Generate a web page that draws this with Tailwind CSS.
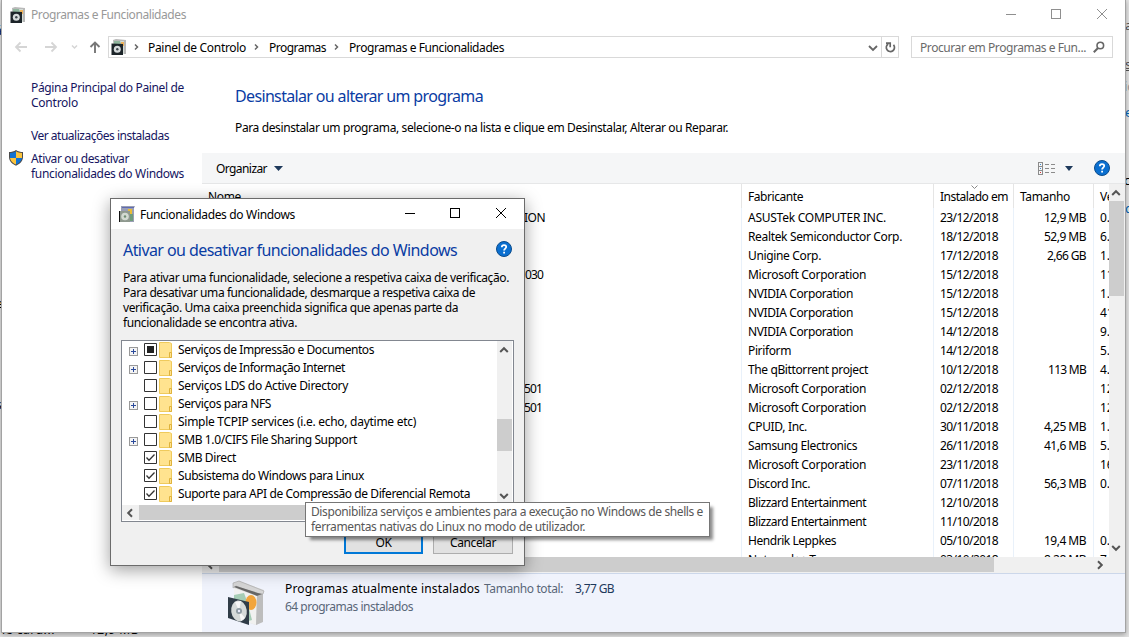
<!DOCTYPE html>
<html lang="pt">
<head>
<meta charset="utf-8">
<title>Programas e Funcionalidades</title>
<script src="https://cdn.jsdelivr.net/npm/@tailwindcss/browser@4"></script>
</head>
<body class="overflow-hidden">
<svg class="hidden">
  <symbol id="box" viewBox="0 0 40 46">
    <path d="M7 3 12 1 37 10 36 14 35 42 29 45 8 38Z" fill="#dcdcdc"/>
    <path d="M7 8 30 16 29 45 7 38Z" fill="#f1f1f0"/>
    <path d="M30 16 36 13 36 42 29 45Z" fill="#bdbdbd"/>
    <path d="M6 3 12 1 37 11 36 14 30 14 9 6 6 8Z" fill="#d5d5d5" stroke="#a5a5a5" stroke-width=".6"/>
    <path d="M7 7 9 6 31 13 35 14 30 16Z" fill="#666"/>
    <path d="M7 15 17 13 20 21 25 40 18 42 7 25Z" fill="#a6cdb5"/>
    <ellipse cx="24" cy="22.500" rx="5.500" ry="7.500" fill="#f2a53c"/>
    <path d="M1 17 22 22 22 45 1 38Z" fill="#303c47"/>
    <ellipse cx="12" cy="31" rx="7.800" ry="10.500" transform="rotate(-8 12 31)" fill="#d6dad9"/>
    <path d="M12 31 8 22 14 21ZM12 31 18 38 14 41Z" fill="#f7f7f7"/>
    <circle cx="12" cy="31" r="3" fill="#8e9ba3"/><circle cx="12" cy="31" r="1.200" fill="#eef"/>
  </symbol>
  <symbol id="disc" viewBox="0 0 16 16">
    <path d="M2 1 5 0 15 1 15 15 3 15Z" fill="#b9b9b9"/><path d="M3 2H13V15H3Z" fill="#d5ddd7"/>
    <path d="M3 2H9L10 5H3Z" fill="#8fb59d"/><path d="M10 3h3v4h-3z" fill="#efb35c"/>
    <path d="M.5 4.500 12 5V16H.5Z" fill="#1c2429"/><circle cx="6.300" cy="10.300" r="3.500" fill="#d5dadb"/><circle cx="6.300" cy="10.300" r="1.200" fill="#3b444b"/>
  </symbol>
  <symbol id="help" viewBox="0 0 16 16">
    <circle cx="8" cy="8" r="7.500" fill="#0a6fd0" stroke="#0b4c8c"/>
    <path d="M5.800 6.200C5.800 3.300 10.300 3.500 10.200 6 10.100 7.600 8.100 7.700 8.100 9.600" fill="none" stroke="#fff" stroke-width="1.800"/><path d="M7.200 10.800h1.800v1.700H7.200z" fill="#fff"/>
  </symbol>
  <symbol id="up" viewBox="0 0 10 8"><path d="M1.200 6 5 2.200 8.800 6" fill="none" stroke="#555" stroke-width="2"/></symbol>
  <symbol id="folder" viewBox="0 0 14 16"><path d="M.5.500H10.500L12.500 1.500V15.500H.5Z" fill="#ffe38f" stroke="#efca5c"/><path d="M10.500 15.500V10.500H12.500V15.500Z" fill="#ffe38f" stroke="#dfb23c"/></symbol>
</svg>

<div class="relative h-[637px] w-[1129px] overflow-hidden bg-[#e4e4e4] font-['Noto_Sans',sans-serif] text-[12px] leading-[15px] whitespace-nowrap text-black">

  <!-- window lying behind: only slivers show at the edges -->
  <div class="absolute top-[18px] left-[1125px] text-[13px] text-[#555]">a</div>
  <div class="absolute top-[57px] left-[1125px] text-[13px] text-[#555] underline">s</div>
  <div class="absolute top-[79px] left-[1124px] text-[13px] text-[#999]">ic</div>
  <div class="absolute top-[105px] left-[1125px] text-[13px] text-[#0067b8]">e</div>
  <div class="absolute top-[173px] left-[1124px] text-[13px]">c</div>
  <div class="absolute top-[201px] left-[1125px] text-[13px] text-[#0067b8]">d</div>
  <div class="absolute top-[23px] left-[-5px]">á</div>
  <div class="absolute top-[296px] left-[-4px]">e</div>
  <div class="absolute top-[397px] left-[-4px]">s</div>
  <div class="absolute top-[622px] left-[2px]" data-w="53">le card...</div>
  <div class="absolute top-[622px] left-[90px]" data-w="49">12,9 MB</div>

  <!-- main window -->
  <div class="absolute -top-px left-px flex h-[634px] w-[1125px] flex-col border border-[#a3a3a3] bg-white shadow-[0_2px_5px_rgba(0,0,0,.3)]">
    <div class="flex h-[29px] shrink-0 items-center pl-2 text-[#999]">
      <svg class="size-4"><use href="#disc"/></svg>
      <span class="ml-[5px]" data-w="155">Programas e Funcionalidades</span>
      <svg class="mr-[17px] mb-px ml-auto h-[12px] w-[104px]" fill="none" stroke="#8f8f8f" shape-rendering="crispEdges"><path d="M2 6.500h10M47.500 1.500h9v9h-9z"/><path d="M93 1 103 11M103 1 93 11" shape-rendering="auto"/></svg>
    </div>
    <div class="flex h-[36px] shrink-0 items-center">
      <svg class="h-[16px] w-[87px]" fill="none"><g stroke="#d5d5d5" stroke-width="1.800"><path d="M25 8H14M18.500 3.500 14 8l4.500 4.500M43 8h11M49.500 3.500 54 8l-4.500 4.500"/></g></svg>
      <svg class="-ml-[19px] h-4 w-[38px]" fill="none"><path d="M2 6.500 4.500 9 7 6.500" stroke="#d5d5d5" stroke-width="1.500"/><path d="M25 14V3.500M20.500 8 25 3.500 29.500 8" stroke="#777" stroke-width="1.900"/></svg>
      <div class="flex h-[22px] w-[791px] items-center border border-[#d9d9d9] pl-[2px]">
        <svg class="size-4"><use href="#disc"/></svg>
        <svg class="ml-[6px] h-2 w-[8px]" fill="none" stroke="#666" stroke-width="1.500"><path d="M2 1.500 4.500 4 2 6.500"/></svg>
        <span class="ml-[7px]" data-w="98">Painel de Controlo</span>
        <svg class="ml-[7px] h-2 w-[8px]" fill="none" stroke="#666" stroke-width="1.500"><path d="M2 1.500 4.500 4 2 6.500"/></svg>
        <span class="ml-[8px]" data-w="57">Programas</span>
        <svg class="ml-[7px] h-2 w-[8px]" fill="none" stroke="#666" stroke-width="1.500"><path d="M2 1.500 4.500 4 2 6.500"/></svg>
        <span class="ml-[8px]" data-w="155">Programas e Funcionalidades</span>
        <svg class="mt-[2px] ml-auto h-2 w-[10px]" fill="none" stroke="#666" stroke-width="1.800"><path d="M1 2 5 6 9 2"/></svg>
        <div class="ml-[3px] flex h-full w-[17px] items-center justify-center border-l border-[#d9d9d9]">
          <svg class="h-[12px] w-[11px]" fill="none" stroke="#666" stroke-width="1.700"><path d="M3.200 3A4.100 4.100 0 1 0 8.500 3.800M1 2.200h4.200v4"/></svg>
        </div>
      </div>
      <div class="ml-[12px] flex h-[22px] w-[202px] items-center border border-[#d9d9d9] pr-[7px] pl-2 text-[#6a6a6a]">
        <span data-w="166">Procurar em Programas e Fun...</span>
        <svg class="ml-auto size-3" fill="none" stroke="#666" stroke-width="1.600"><circle cx="7.300" cy="4.500" r="3.300"/><path d="M5 7 .8 11.200" stroke-width="2"/></svg>
      </div>
    </div>

    <div class="flex min-h-0 flex-1">
      <!-- sidebar -->
      <div class="w-[200px] shrink-0 pt-[15px] text-[#15155f]">
        <div class="pl-[29px]"><div><span data-w="153">Página Principal do Painel de</span></div><div><span data-w="47">Controlo</span></div></div>
        <div class="mt-[18px] pl-[29px]"><span data-w="138">Ver atualizações instaladas</span></div>
        <div class="mt-[8px] flex pl-[6px]">
          <svg class="-mt-px size-4 shrink-0" viewBox="0 0 16 16"><path d="M8 0C10 1.500 12.500 2 15 2V7C15 11.500 11.500 14 8 15.700 4.500 14 1 11.500 1 7V2C3.500 2 6 1.500 8 0Z" fill="#4b4b4b"/><path d="M8 1.300V8H2V3C4.500 2.900 6.500 2.300 8 1.300ZM8 8h6C13.500 11.500 11 13.300 8 14.600Z" fill="#1172d3"/><path d="M8 1.300C9.500 2.300 11.500 2.900 14 3V8H8ZM8 8v6.600C5 13.300 2.500 11.500 2 8Z" fill="#fcc43c"/></svg>
          <div class="ml-[7px]"><div><span data-w="98">Ativar ou desativar</span></div><div><span data-w="153">funcionalidades do Windows</span></div></div>
        </div>
      </div>

      <!-- content -->
      <div class="flex min-w-0 flex-1 flex-col">
        <div class="h-[88px] shrink-0 pt-[21px] pl-[33px]">
          <div class="text-[16px] leading-[20px] text-[#0a3ca3]"><span data-size="16" data-w="248">Desinstalar ou alterar um programa</span></div>
          <div class="mt-[14px]"><span data-w="493">Para desinstalar um programa, selecione-o na lista e clique em Desinstalar, Alterar ou Reparar.</span></div>
        </div>
        <div class="flex h-[31px] shrink-0 items-center border-b border-[#e6e7e8] bg-[#f5f6f7] pr-[15px] pl-[14px]">
          <span data-w="51">Organizar</span>
          <svg class="ml-[7px] h-[5px] w-[9px]" fill="#1e395b"><path d="M0 0h9L4.500 5z"/></svg>
          <svg class="ml-auto h-[13px] w-[17px]" fill="none" stroke="#8b8b8b" shape-rendering="crispEdges"><path d="M.5.500h4v12h-4zM.5 4.500h4M.5 8.500h4M7 2.500h4M13 2.500h4M7 6.500h4M13 6.500h4M7 10.500h4M13 10.500h4"/><path d="M2 2.500h1M2 6.500h1" stroke="#3c8bd0"/><path d="M2 10.500h1" stroke="#d33"/></svg>
          <svg class="mr-[21px] ml-[10px] h-[5px] w-[8px]" fill="#1e395b"><path d="M0 0h8L4 5z"/></svg>
          <svg class="size-4"><use href="#help"/></svg>
        </div>
        <div class="flex h-[373px] shrink-0">
          <div class="flex min-w-0 flex-1 flex-col overflow-hidden">
            <div class="relative flex h-[24px] shrink-0">
              <div class="w-[539px] pt-[5px] pl-[6px]"><span data-w="33">Nome</span></div>
              <div class="h-full w-[192px] border-l border-[#e5e5e5] pt-[5px] pl-[6px]"><span data-w="55">Fabricante</span></div>
              <div class="h-full w-[80px] border-l border-[#e5e5e5] pt-[5px] pl-[6px]"><span data-w="68">Instalado em</span></div>
              <div class="h-full w-[80px] border-l border-[#e5e5e5] pt-[5px] pl-[6px]"><span data-w="50">Tamanho</span></div>
              <div class="h-full min-w-0 flex-1 overflow-hidden border-l border-[#e5e5e5] pt-[5px] pl-[6px]"><span data-w="37">Versão</span></div>
              <svg class="absolute top-px left-[769px] h-[5px] w-[7px]" fill="none" stroke="#888"><path d="M.5.500 3.500 3.500 6.500.500"/></svg>
            </div>
            <div id="rows" class="flex min-h-0 flex-1 flex-col overflow-hidden"></div>
          </div>
          <div class="flex w-[16px] shrink-0 flex-col items-start bg-[#f0f0f0]">
            <svg class="mt-[5px] ml-[2px] h-2 w-[10px] shrink-0"><use href="#up"/></svg>
            <div class="mt-[4px] h-[95px] w-[15px] bg-[#cdcdcd]"></div>
            <svg class="mt-auto mb-[5px] ml-[2px] h-2 w-[10px] rotate-180"><use href="#up"/></svg>
          </div>
        </div>
        <div class="flex h-[16px] shrink-0 items-center bg-[#f0f0f0]">
          <svg class="ml-[3px] h-2 w-[10px] -rotate-90"><use href="#up"/></svg>
          <div class="ml-[4px] h-[15px] w-[775px] self-start bg-[#cdcdcd]"></div>
          <svg class="ml-auto mr-[20px] h-2 w-[10px] rotate-90"><use href="#up"/></svg>
        </div>
        <div class="flex min-h-0 flex-1 border-t border-[#ccd7ea] bg-[#f0f3fc]">
          <svg class="mt-[6px] ml-[25px] h-[46px] w-[40px]"><use href="#box"/></svg>
          <div class="mt-[7px] ml-[18px]">
            <div class="flex"><span data-w="195">Programas atualmente instalados</span><span class="ml-[4px] text-[#5a6779]" data-w="79">Tamanho total:</span><span class="ml-[12px] text-[#1e395b]" data-w="39">3,77 GB</span></div>
            <div class="mt-[3px] text-[#5a6779]"><span data-w="128">64 programas instalados</span></div>
          </div>
        </div>
      </div>
    </div>
  </div>

  <!-- features dialog -->
  <div class="absolute top-[198px] left-[110px] flex h-[368px] w-[415px] flex-col border border-[#6b6b6b] bg-[#f0f0f0] shadow-[0_4px_16px_rgba(0,0,0,.38)]">
    <div class="flex h-[30px] shrink-0 items-center bg-white pl-2">
      <svg class="size-4" viewBox="0 0 16 16"><path d="M2 0h14l-1 2v14H4L2 5z" fill="#9a9fb5"/><path d="M3 1h12v1H3z" fill="#5f6bb0"/><path d="M9 3h4v5H9z" fill="#e9bd35"/><path d="M11 8h3v7h-3z" fill="#6f9c7b"/><path d="M1 5h10v11H1z" fill="#8f998f"/><path d="M0 5h1v11H0z" fill="#111"/><circle cx="6" cy="10.500" r="3.800" fill="#d3dad2"/><circle cx="6" cy="10.500" r="1.200" fill="#6e8b72"/></svg>
      <span class="ml-[5px]" data-w="155">Funcionalidades do Windows</span>
      <svg class="mr-[17px] mb-[2px] ml-auto h-[12px] w-[104px]" fill="none" stroke="#000" shape-rendering="crispEdges"><path d="M2 6.500h10M47.500 1.500h9v9h-9z"/><path d="M93 1 103 11M103 1 93 11" shape-rendering="auto"/></svg>
    </div>
    <div class="mt-[11px] flex h-[20px] shrink-0 items-center pr-[12px] pl-[12px] text-[16px] leading-[20px] text-[#0a3ca3]">
      <span data-size="16" data-w="334">Ativar ou desativar funcionalidades do Windows</span>
      <svg class="mb-[3px] ml-auto size-4 shrink-0"><use href="#help"/></svg>
    </div>
    <div class="mt-[10px] h-[60px] shrink-0 pl-[12px]">
      <div><span data-w="386">Para ativar uma funcionalidade, selecione a respetiva caixa de verificação.</span></div>
      <div><span data-w="352">Para desativar uma funcionalidade, desmarque a respetiva caixa de</span></div>
      <div><span data-w="335">verificação. Uma caixa preenchida significa que apenas parte da</span></div>
      <div><span data-w="174">funcionalidade se encontra ativa.</span></div>
    </div>
    <div class="mt-[10px] ml-[10px] flex h-[182px] w-[393px] shrink-0 flex-col border border-[#828790] bg-white">
      <div class="flex h-[164px] shrink-0">
        <div id="tree" class="flex-1"></div>
        <div class="mr-px flex w-[15px] shrink-0 flex-col items-start bg-[#f0f0f0]">
          <svg class="mt-[5px] ml-[2px] h-2 w-[10px] shrink-0"><use href="#up"/></svg>
          <div class="mt-[65px] h-[32px] w-full bg-[#cdcdcd]"></div>
          <svg class="mt-auto mb-[5px] ml-[2px] h-2 w-[10px] rotate-180"><use href="#up"/></svg>
        </div>
      </div>
      <div class="flex h-[15px] items-center bg-[#f0f0f0]">
        <svg class="ml-[3px] h-2 w-[10px] -rotate-90"><use href="#up"/></svg>
        <div class="ml-[4px] h-full w-[300px] bg-[#cdcdcd]"></div>
      </div>
    </div>
    <div class="mt-[9px] flex justify-end gap-[10px] pr-[11px]">
      <div class="flex h-[23px] w-[79px] items-center justify-center border-2 border-[#0078d7] bg-[#e1e1e1]"><span data-w="16">OK</span></div>
      <div class="flex h-[23px] w-[80px] items-center justify-center border border-[#adadad] bg-[#e1e1e1]"><span data-w="46">Cancelar</span></div>
    </div>
  </div>

  <!-- tooltip -->
  <div class="absolute top-[502px] left-[305px] h-[35px] w-[405px] border border-[#767676] bg-white pt-px pl-[5px] text-[#575757] shadow-[4px_4px_3px_-1px_rgba(0,0,0,.45)]">
    <div><span data-w="392">Disponibiliza serviços e ambientes para a execução no Windows de shells e</span></div>
    <div><span data-w="274">ferramentas nativas do Linux no modo de utilizador.</span></div>
  </div>
</div>

<script>
const programs = [
  ['ION', 545, 'ASUSTek COMPUTER INC.', 138, '23/12/2018', '12,9 MB', '0.'],
  ['', 0, 'Realtek Semiconductor Corp.', 154, '18/12/2018', '52,9 MB', '6.'],
  ['', 0, 'Unigine Corp.', 73, '17/12/2018', '2,66 GB', '1.'],
  ['030', 543, 'Microsoft Corporation', 118, '15/12/2018', '', '11'],
  ['', 0, 'NVIDIA Corporation', 105, '15/12/2018', '', '1.'],
  ['', 0, 'NVIDIA Corporation', 105, '15/12/2018', '', '41'],
  ['', 0, 'NVIDIA Corporation', 105, '14/12/2018', '', '9.'],
  ['', 0, 'Piriform', 43, '14/12/2018', '', '5.'],
  ['', 0, 'The qBittorrent project', 120, '10/12/2018', '113 MB', '4.'],
  ['501', 542, 'Microsoft Corporation', 118, '02/12/2018', '', '12'],
  ['501', 542, 'Microsoft Corporation', 118, '02/12/2018', '', '12'],
  ['', 0, 'CPUID, Inc.', 59, '30/11/2018', '4,25 MB', '1.'],
  ['', 0, 'Samsung Electronics', 109, '26/11/2018', '41,6 MB', '5.'],
  ['', 0, 'Microsoft Corporation', 118, '23/11/2018', '', '16'],
  ['', 0, 'Discord Inc.', 62, '07/11/2018', '56,3 MB', '0.'],
  ['', 0, 'Blizzard Entertainment', 118, '12/10/2018', '', ''],
  ['', 0, 'Blizzard Entertainment', 118, '11/10/2018', '', ''],
  ['', 0, 'Hendrik Leppkes', 88, '05/10/2018', '19,4 MB', '0.'],
  ['', 0, 'Notepad++ Team', 90, '03/10/2018', '8,28 MB', '7.'],
];
document.getElementById('rows').innerHTML = programs.map(([n, end, f, w, d, s, v]) => `
  <div class="flex h-[19px] shrink-0 leading-[19px]">
    <div class="w-[539px] shrink-0 text-right" style="padding-right:${n ? 741 - end : 0}px">${n ? `<span data-w="${n === 'ION' ? 21 : 18}">${n}</span>` : ''}</div>
    <div class="w-[192px] shrink-0 border-l border-[#e9f1fa] pl-[6px]"><span data-w="${w}">${f}</span></div>
    <div class="w-[80px] shrink-0 border-l border-[#e9f1fa] pl-[6px]"><span data-w="58">${d}</span></div>
    <div class="w-[80px] shrink-0 border-l border-[#e9f1fa] pr-[7px] text-right">${s ? `<span data-w="${s.length === 6 ? 38 : s.endsWith('GB') ? 39 : 42}">${s}</span>` : ''}</div>
    <div class="min-w-0 flex-1 overflow-hidden border-l border-[#e9f1fa] pl-[6px]">${v}</div>
  </div>`).join('');

const features = [
  ['Serviços de Impressão e Documentos', 196, 1, 'part'],
  ['Serviços de Informação Internet', 167, 1, ''],
  ['Serviços LDS do Active Directory', 170, 0, ''],
  ['Serviços para NFS', 93, 1, ''],
  ['Simple TCPIP services (i.e. echo, daytime etc)', 238, 0, ''],
  ['SMB 1.0/CIFS File Sharing Support', 179, 1, ''],
  ['SMB Direct', 58, 0, 'on'],
  ['Subsistema do Windows para Linux', 186, 0, 'on'],
  ['Suporte para API de Compressão de Diferencial Remota', 292, 0, 'on'],
];
const mark = {
  '': '',
  part: '<path d="M3 3h7v7H3z" fill="#222"/>',
  on: '<path d="M2.500 6.500 5 9.200 10.500 3.500" fill="none" stroke="#333" stroke-width="1.300"/>',
};
document.getElementById('tree').innerHTML = features.map(([t, w, plus, m]) => `
  <div class="flex h-[18px] items-center pl-[7px]">
    <svg class="mt-[3px] h-[9px] w-[9px]" shape-rendering="crispEdges">${plus ? '<path d="M.5.500h8v8h-8z" fill="#f4f4f4" stroke="#999"/><path d="M2 4.500h5M4.500 2v5" stroke="#2b4a9b"/>' : ''}</svg>
    <svg class="mb-px ml-[6px] h-[13px] w-[13px]"><path d="M.5.500h12v12H.5z" fill="#fff" stroke="#333"/>${mark[m]}</svg>
    <svg class="ml-[2px] h-[16px] w-[14px]"><use href="#folder"/></svg>
    <span class="mb-px ml-[5px]" data-w="${w}">${t}</span>
  </div>`).join('');

const ctx = document.createElement('canvas').getContext('2d');
document.querySelectorAll('[data-w]').forEach(el => {
  ctx.font = `${el.dataset.size || 12}px "Noto Sans"`;
  const text = el.textContent;
  el.style.letterSpacing = ((el.dataset.w - ctx.measureText(text).width) / text.length).toFixed(3) + 'px';
});
</script>
</body>
</html>
